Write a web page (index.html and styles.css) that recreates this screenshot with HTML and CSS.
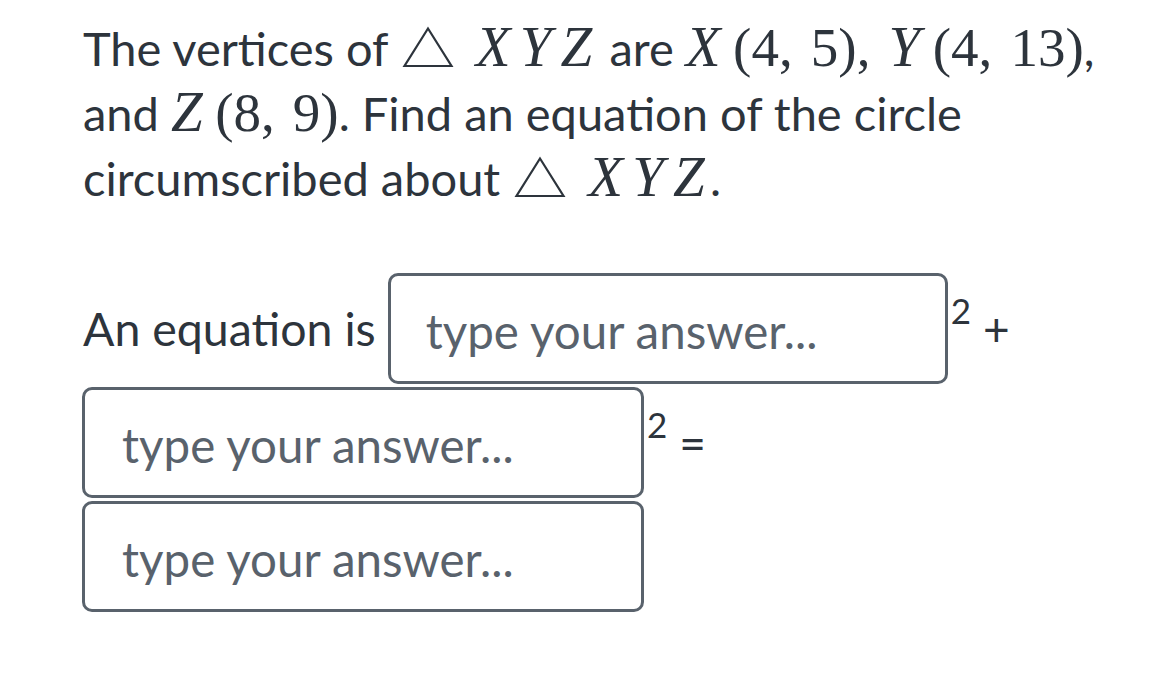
FILE: index.html
```html
<!DOCTYPE html>
<html lang="en">
<head>
<meta charset="utf-8">
<title>Circumscribed circle</title>
<link rel="stylesheet" href="styles.css">
</head>
<body>
<main class="question">
  <p class="prompt">The vertices of <span class="math"><svg class="tri" viewBox="0 0 52 42" width="52" height="42" aria-hidden="true"><path d="M26 2.5 L49.5 40 L2.5 40 Z" fill="none" stroke="currentColor" stroke-width="2.2" stroke-linejoin="miter"/></svg><i class="name">XYZ</i></span> are <span class="math"><i>X</i><span class="pt">(4,<span class="th"></span>5)</span>,<span class="th"></span><i>Y</i><span class="pt">(4,<span class="th"></span>13)</span></span>,<br>and <span class="math"><i>Z</i><span class="pt">(8,<span class="th"></span>9)</span></span>. Find an equation of the circle<br>circumscribed about <span class="math"><svg class="tri" viewBox="0 0 52 42" width="52" height="42" aria-hidden="true"><path d="M26 2.5 L49.5 40 L2.5 40 Z" fill="none" stroke="currentColor" stroke-width="2.2" stroke-linejoin="miter"/></svg><i class="name">XYZ</i></span>.</p>

  <div class="answer">
    <div class="row">
      <span class="label">An equation is</span>
      <input class="box" type="text" placeholder="type your answer...">
      <span class="sup">2</span>
      <span class="op">+</span>
    </div>
    <div class="row">
      <input class="box box-left" type="text" placeholder="type your answer...">
      <span class="sup">2</span>
      <span class="op">=</span>
    </div>
    <div class="row">
      <input class="box box-left" type="text" placeholder="type your answer...">
    </div>
  </div>
</main>
</body>
</html>
```

FILE: styles.css
```css
html, body {
  margin: 0;
  padding: 0;
  background: #ffffff;
}

body {
  font-family: Lato, "Open Sans", sans-serif;
  color: #2d343c;
}

.question {
  padding: 16px 0 0 83px;
}

.prompt {
  margin: 0;
  font-size: 47px;
  line-height: 65px;
  white-space: nowrap;
}

.math {
  font-family: "Liberation Serif", "DejaVu Serif", serif;
  font-size: 55px;
  line-height: 0;
}

.math i {
  font-size: 57px;
  font-style: italic;
  letter-spacing: 0.2em;
}

.math i.name {
  letter-spacing: 0.16em;
  margin-right: -0.07em;
}

.pt {
  margin-left: 0.02em;
}

.th {
  display: inline-block;
  width: 0.33em;
}

.tri {
  display: inline-block;
  vertical-align: -2px;
  margin: 0 22px 0 2px;
  color: #2d343c;
}

.answer {
  margin-top: 62px;
  display: flex;
  flex-direction: column;
  gap: 3px;
  font-size: 46.5px;
}

.row {
  display: flex;
  align-items: center;
  height: 111px;
}

.label {
  margin-right: 12px;
  line-height: 1;
}

.box {
  box-sizing: border-box;
  width: 560px;
  height: 111px;
  margin: 0;
  border: 3px solid #59626c;
  border-radius: 10px;
  padding: 4px 0 0 35px;
  font-family: Lato, "Open Sans", sans-serif;
  font-size: 47.5px;
  color: #2d343c;
  background: #ffffff;
  outline: none;
}

.box-left {
  width: 562px;
  margin-left: -1px;
  padding-left: 37px;
}

.box::placeholder {
  color: #59626c;
  opacity: 1;
}

.sup {
  align-self: flex-start;
  margin: 20px 0 0 3px;
  font-size: 35px;
  line-height: 1;
}

.op {
  margin-left: 12px;
  font-size: 46px;
  line-height: 1;
}
```
